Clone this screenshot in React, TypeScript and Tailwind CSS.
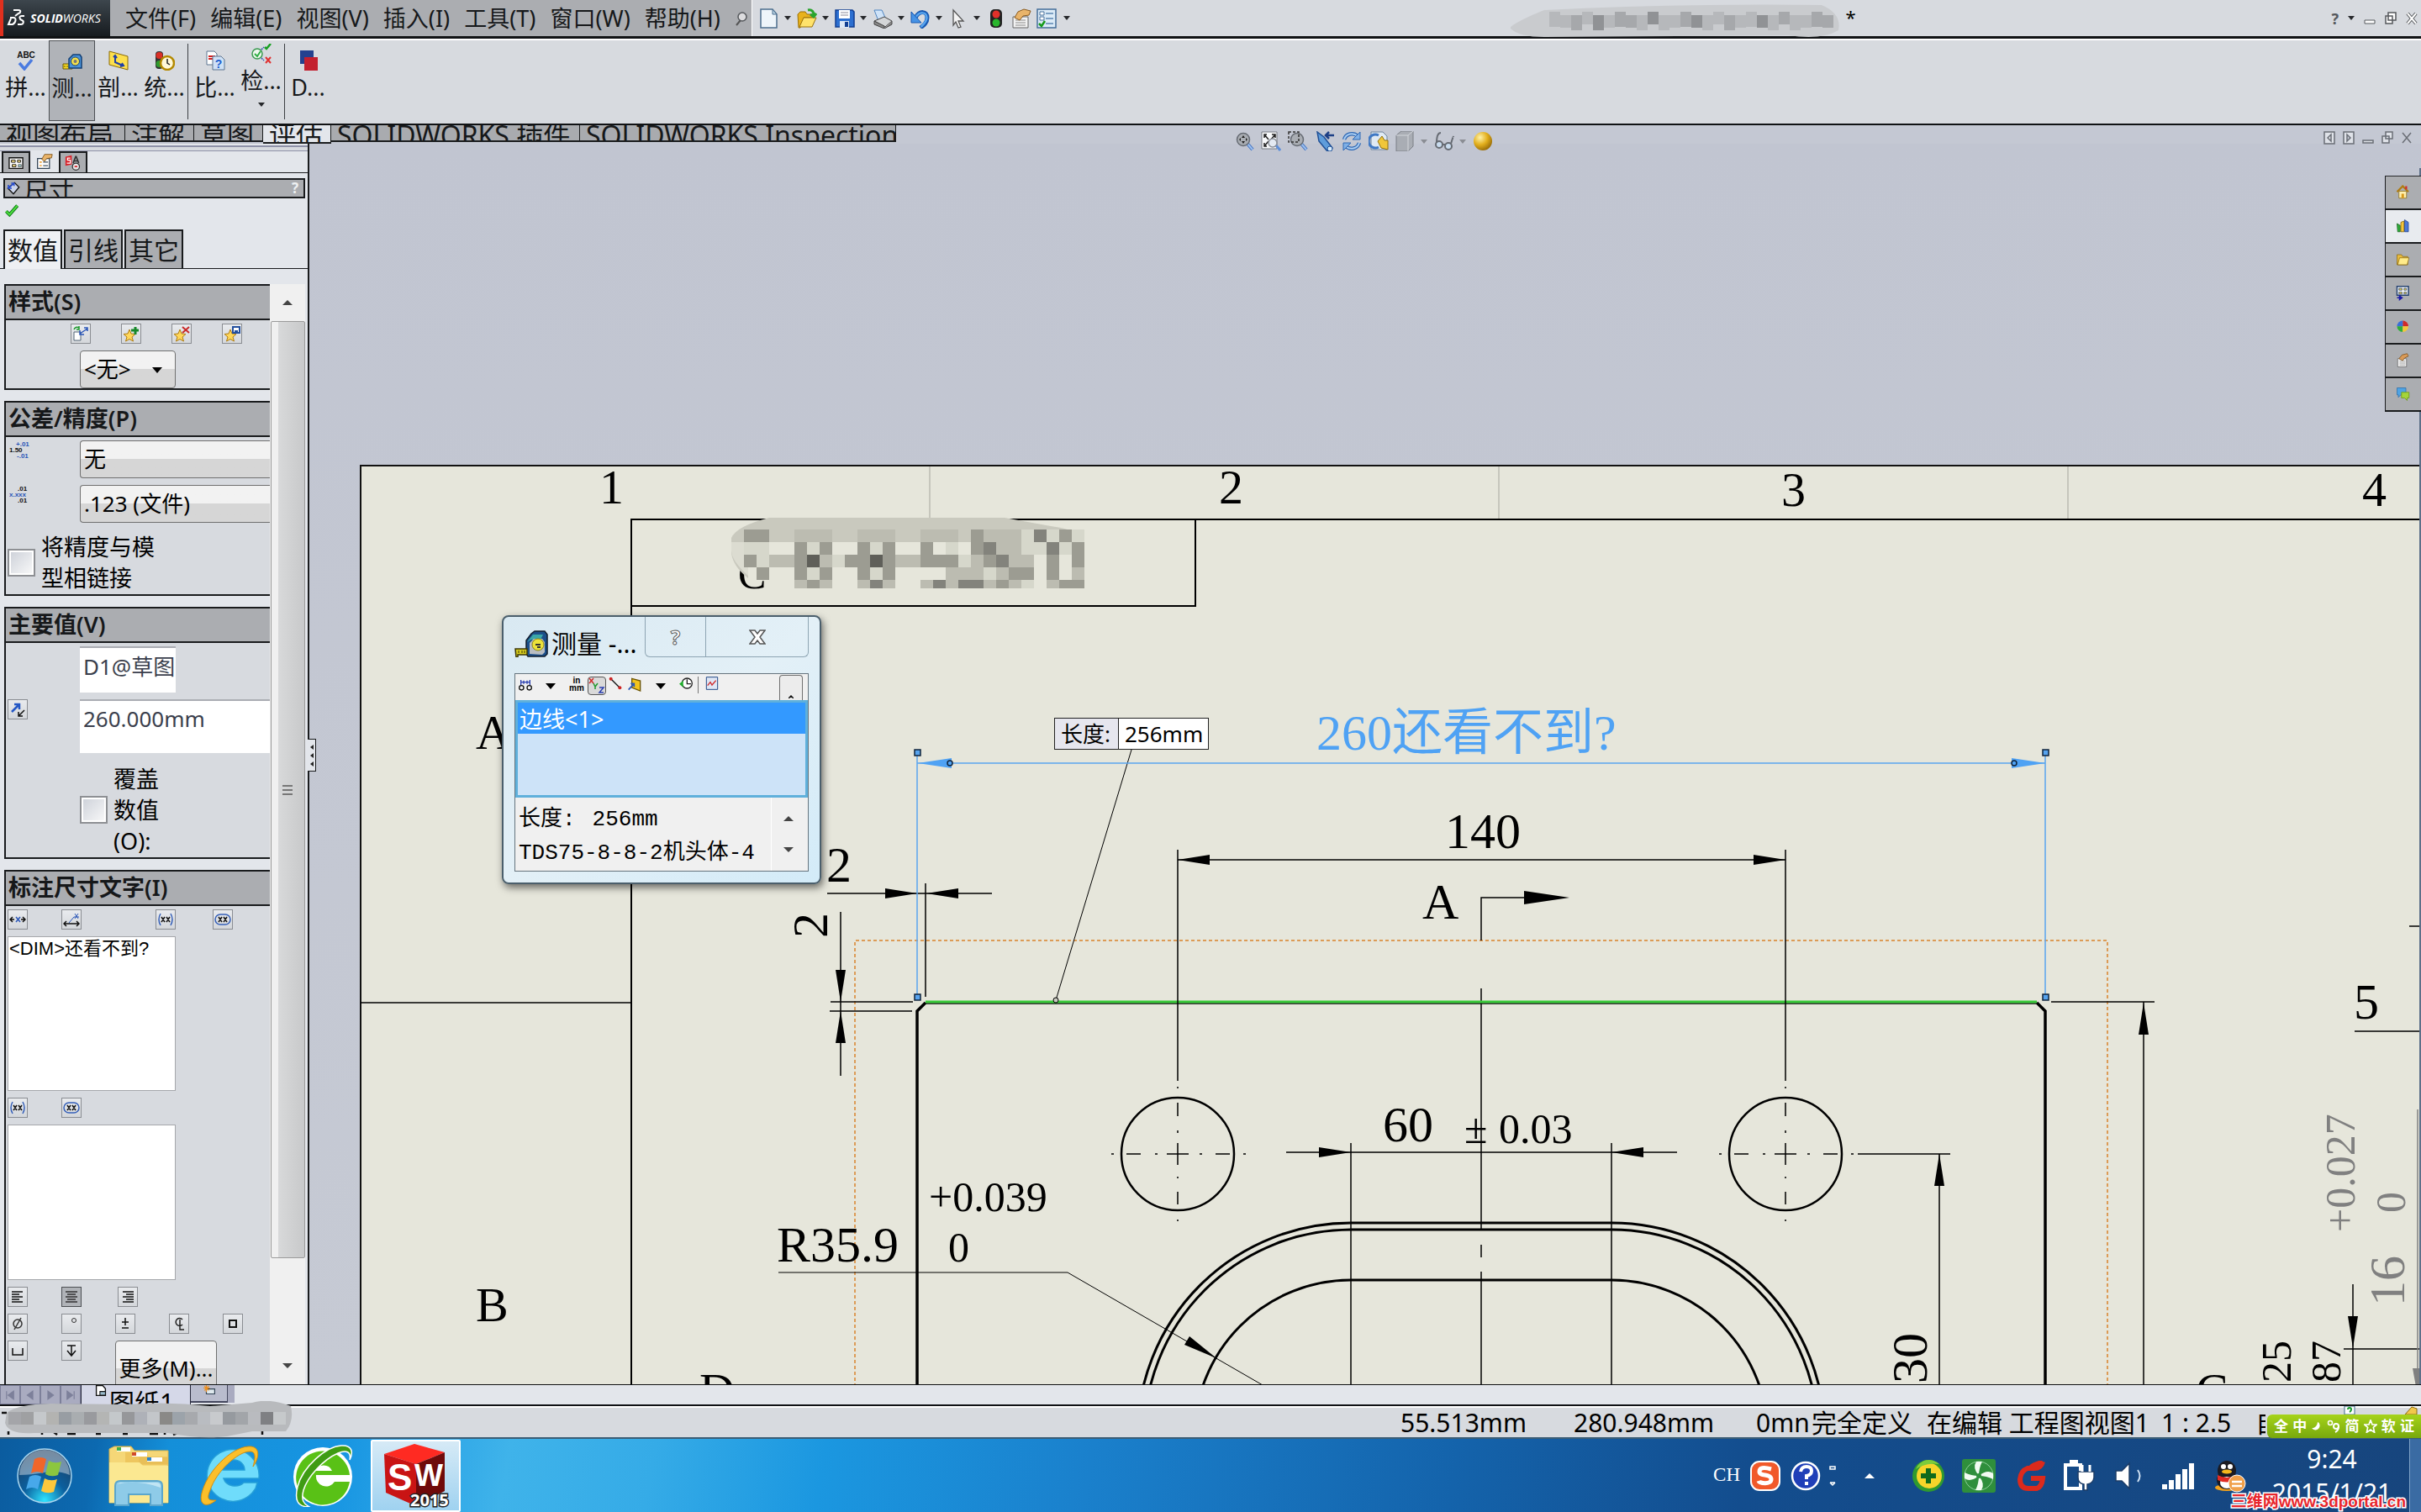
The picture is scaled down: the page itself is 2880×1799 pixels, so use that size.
import type { ReactNode } from "react";

/* ---------- small drawing helpers ---------- */

function Ico({ children, className = "size-6", vb = "0 0 24 24" }: { children: ReactNode; className?: string; vb?: string }) {
  return (
    <svg viewBox={vb} className={`${className} shrink-0`} fill="none" aria-hidden="true">
      {children}
    </svg>
  );
}

function Caret({ className = "text-[#26282b]" }: { className?: string }) {
  return (
    <Ico className={`h-[5px] w-2 ${className}`} vb="0 0 8 5">
      <path d="M0 0h8L4 5z" fill="currentColor" />
    </Ico>
  );
}

const GlassPlus = ({ kind }: { kind: "fit" | "area" | "plain" }) =>
  kind === "fit" ? (
    <Ico>
      <path d="M1 1h18v20H1z" fill="#f8f9fb" stroke="#777b82" />
      <path d="M4 8V4h3M13 4h4v4M4 14v4h3M4 4l5 6M17 4l-5 6M4 18l5-6" stroke="#222" strokeWidth="1.500" />
      <path d="M18 17l5 6" stroke="#5f8fd8" strokeWidth="3" />
      <circle cx="14" cy="14" r="5" fill="#e4eaf2" stroke="#8a8f98" strokeWidth="1.500" />
    </Ico>
  ) : (
    <Ico>
      <path d="M16 15l6 7" stroke="#3f6fc0" strokeWidth="4" />
      <path d="M16 15l6 7" stroke="#9cc0ee" strokeWidth="2" />
      <circle cx="11" cy="10" r="7.500" fill="#a9adb3" stroke="#666b73" strokeWidth="1.500" />
      {kind === "plain" && <path d="M11 5l-2 3h4zM11 15l-2-3h4zM6 10l2-2v4zM16 10l-2-2v4z" fill="#222" />}
      {kind === "area" && <path d="M1 1h12v12H1z" stroke="#333" strokeWidth="1.500" strokeDasharray="3 2" />}
    </Ico>
  );

const NewDoc = () => (
  <Ico>
    <path d="M2 1h14l5 6v16H2z" fill="#eef5fa" stroke="#4d6f8f" strokeWidth="1.500" />
    <path d="M16 1v6h5z" fill="#b9d3e4" stroke="#4d6f8f" />
  </Ico>
);
const OpenDoc = () => (
  <Ico>
    <path d="M1 7l3-3h6l2 3h7v4H8L4 23H2z" fill="#e8b21c" stroke="#9a7109" />
    <path d="M8 11h15l-5 11H3z" fill="#ffe36b" stroke="#9a7109" />
    <path d="M13 2c5-1 7 2 7 6M16 7l4 3 3-4" stroke="#29a52d" strokeWidth="3" />
  </Ico>
);
const SaveIco = () => (
  <Ico>
    <path d="M1 2h20l2 2v18H1z" fill="#2c6fd0" stroke="#123f91" strokeWidth="1.500" />
    <path d="M5 2h13v10H5z" fill="#fff" />
    <path d="M7 5h9M7 8h9" stroke="#889" />
    <path d="M6 15h11v8H6z" fill="#dce8f6" />
    <path d="M12 16h4v6h-4z" fill="#123f91" />
  </Ico>
);
const PrintIco = () => (
  <Ico>
    <path d="M2 2h9l5 11-9 2z" fill="#cfe3f8" stroke="#4f86c2" />
    <path d="M2 15l12-5 9 5-8 7z" fill="#d4d6d8" stroke="#444" />
    <path d="M2 15v4l12 5v-3zM23 15v4l-9 5" fill="#888" stroke="#444" />
  </Ico>
);
const UndoIco = () => (
  <Ico>
    <path d="M6 11C11 2 20 3 20 11c0 6-4 9-8 12" stroke="#1757b0" strokeWidth="5" />
    <path d="M6 11C11 3 19 4 19.500 11c0 5-4 8-7 11" stroke="#58a5ef" strokeWidth="2.500" />
    <path d="M1 4v13h12z" fill="#4693e6" stroke="#1757b0" />
  </Ico>
);
const CursorIco = () => (
  <Ico>
    <path d="M6 2l12 13-6 0 3 7-3 1-3-7-3 4z" fill="#f4f4f4" stroke="#555" strokeWidth="1.300" />
  </Ico>
);
const LightIco = () => (
  <Ico>
    <rect x="5" y="1" width="14" height="22" rx="5" fill="#222" />
    <circle cx="12" cy="7" r="4.500" fill="#e0302a" />
    <circle cx="12" cy="17" r="4.500" fill="#29b62d" />
  </Ico>
);
const HandIco = () => (
  <Ico>
    <path d="M2 10h18v13H2z" fill="#f2f2f2" stroke="#666" />
    <path d="M5 14h12M5 17h12M5 20h12" stroke="#8a8a8a" />
    <path d="M4 11l4-7 7-3 8 2-2 5-7 1-4 5z" fill="#e9b46a" stroke="#8a5a1d" />
  </Ico>
);
const ListIco = () => (
  <Ico>
    <path d="M1 1h22v22H1z" fill="#dcebf7" stroke="#456f9a" strokeWidth="1.500" />
    <path d="M4 4h5v4H4zM4 10h5v4H4z" stroke="#456f9a" fill="#fff" />
    <path d="M11 6h9M11 12h9M11 18h9" stroke="#5b86b3" strokeWidth="1.500" />
    <path d="M3 18l3 3 4-6" stroke="#159a1a" strokeWidth="2.500" />
  </Ico>
);
const TapeIco = ({ className = "size-6" }: { className?: string }) => (
  <Ico className={className}>
    <path d="M1 15h11v6H1z" fill="#f6d925" stroke="#6b5b05" />
    <path d="M3 17v2M6 17v2M9 17v2" stroke="#6b5b05" />
    <path d="M8 20V9l5-5h8l2 3v13z" fill="#4a93d8" stroke="#123f75" strokeWidth="1.500" />
    <circle cx="15.500" cy="12" r="5" fill="#f4e14b" stroke="#1d3f66" />
    <circle cx="15.500" cy="12" r="2" fill="#777" />
  </Ico>
);

const BigTape = () => (
  <Ico className="h-8 w-10" vb="0 0 40 32">
    <path d="M14 28V12l6-8 4-3h12l3 4v23l-3 3H16z" fill="#1c4f8a" stroke="#111d2c" strokeWidth="1.500" />
    <path d="M15 14l7-9h12l-3 6H20z" fill="#3ba7a8" />
    <path d="M18 28V15l5-5h10l3 4v12l-3 3z" fill="#b9bdc2" />
    <circle cx="28" cy="17" r="7" fill="#ece23a" stroke="#8d8414" />
    <path d="M25 17h6M27 20h4" stroke="#333" strokeWidth="2" />
    <path d="M1 22h14v7H4v3H2z" fill="#d8cc1e" stroke="#3b3604" strokeWidth="1.500" />
    <path d="M5 24v3M9 24v3M12 24v3" stroke="#3b3604" />
  </Ico>
);

/* ---------- title bar ---------- */

const menus = ["文件(F)", "编辑(E)", "视图(V)", "插入(I)", "工具(T)", "窗口(W)", "帮助(H)"];

const titleTiles = "bbabcbaabcbbacbbabbcbabbaa";
const tileFill: Record<string, string> = { a: "#a6a8ab", b: "#b6b8bb", c: "#909295" };

function TitleBar() {
  const quick: [string, ReactNode][] = [
    ["新建", <NewDoc />],
    ["打开", <OpenDoc />],
    ["保存", <SaveIco />],
    ["打印", <PrintIco />],
    ["撤销", <UndoIco />],
    ["选择", <CursorIco />],
  ];
  return (
    <header className="flex h-[46px] shrink-0 items-stretch border-b-[3px] border-[#101214] bg-[#d7dadf]">
      <div className="flex w-[131px] items-center gap-1 border-l-4 border-[#e0301e] bg-linear-to-b from-[#3d464d] to-[#171c20] pl-1 text-white">
        <Ico className="h-6 w-6">
          <path d="M8 2h6c3 0 3 3 0 4l-4 3M4 11h4c4 0 3 6-1 8H2l3-7M21 9h-3c-4 0-3 4 0 5s2 5-1 5h-4" stroke="#fff" strokeWidth="2" />
        </Ico>
        <span className="font-['Open_Sans',sans-serif] text-[14px] font-bold italic">
          SOLID<span className="font-normal">WORKS</span>
        </span>
      </div>
      <nav className="flex w-[764px] items-center gap-[17px] border-r border-white bg-[#abadb1] pl-[18px]">
        {menus.map((m) => (
          <button key={m} type="button" className="text-[27px] leading-8 whitespace-nowrap text-[#16181a]">
            {m}
          </button>
        ))}
        <Ico className="h-5 w-4" vb="0 0 16 20">
          <path d="M2 18l5-6" stroke="#555" strokeWidth="2" />
          <circle cx="9" cy="8" r="5" fill="#dcdcde" stroke="#55585c" strokeWidth="1.500" />
        </Ico>
      </nav>
      <div className="flex items-center pl-2">
        {quick.map(([n, i]) => (
          <div key={n} className="flex w-[45px] items-center gap-1.5">
            <button type="button" aria-label={n}>
              {i}
            </button>
            <Caret />
          </div>
        ))}
        <button type="button" aria-label="重建模型">
          <LightIco />
        </button>
        <button type="button" aria-label="文件属性" className="ml-1.5">
          <HandIco />
        </button>
        <button type="button" aria-label="选项" className="mr-2 ml-1.5">
          <ListIco />
        </button>
        <Caret />
      </div>
      <div className="ml-auto flex items-start">
        <svg viewBox="0 0 392 45" className="h-[45px] w-[392px] overflow-visible" aria-hidden="true">
          <path d="M0 32q10-8 40-20q160-8 330-6q24 10 20 30q-20 12-60 6l-290 2q-30 0-40-10z" fill="#c9cbce" />
          {titleTiles.split("").map((t, i) => (
            <rect key={i} x={46 + i * 13} y={i % 3 === 0 ? 14 : 18} width="13" height={i % 2 ? 15 : 18} fill={tileFill[t]} />
          ))}
        </svg>
        <span className="mt-2 w-[584px] pl-1.5 text-[22px] leading-6">*</span>
        <div className="flex h-full items-center gap-[11px] pr-1 text-[#55585c]">
          <button type="button" aria-label="帮助" className="text-[18px] leading-5 font-bold">
            ?
          </button>
          <Caret />
          <button type="button" aria-label="最小化">
            <Ico className="h-4 w-3.5" vb="0 0 14 16"><path d="M1 10h12v4H1z" fill="#fff" stroke="#55585c" /></Ico>
          </button>
          <button type="button" aria-label="还原">
            <Ico className="h-4 w-3.5" vb="0 0 14 16"><path d="M4 1h9v9H4zM1 5h8v9H1z" fill="#fff" stroke="#55585c" strokeWidth="1.500" /></Ico>
          </button>
          <button type="button" aria-label="关闭">
            <Ico className="h-4 w-3.5" vb="0 0 14 16"><path d="M2 2l10 12M12 2L2 14" stroke="#55585c" strokeWidth="4" /><path d="M2 2l10 12M12 2L2 14" stroke="#fff" strokeWidth="2" /></Ico>
          </button>
        </div>
      </div>
    </header>
  );
}

/* ---------- command manager ---------- */

function CommandButton({ label, icon, pressed, caret }: { label: string; icon: ReactNode; pressed?: boolean; caret?: boolean }) {
  return (
    <button
      type="button"
      className={`flex h-24 w-[55px] shrink-0 flex-col items-center text-[27px] leading-9 whitespace-nowrap text-[#16181a] ${
        pressed ? "border border-[#4c4f53] bg-[#b0b3b8]" : ""
      } ${caret ? "pt-1" : "pt-3"}`}
    >
      {icon}
      <span className="mt-0.5">{label}</span>
      {caret && <span className="mt-2"><Caret /></span>}
    </button>
  );
}

function CommandManager() {
  return (
    <section className="flex h-[103px] shrink-0 items-start border-t-2 border-b-2 border-t-white border-b-[#101214] bg-[#d7dadf] pl-[3px]">
      <CommandButton
        label="拼..."
        icon={
          <Ico>
            <text x="12" y="9" textAnchor="middle" fontSize="10" fontWeight="700" fontFamily="Liberation Sans" fill="#111">ABC</text>
            <path d="M4 15l6 7 9-11" stroke="#4a7be0" strokeWidth="3.500" />
          </Ico>
        }
      />
      <CommandButton pressed label="测..." icon={<TapeIco />} />
      <CommandButton
        label="剖..."
        icon={
          <Ico>
            <path d="M1 1l22 6v16L1 17z" fill="#fddf4c" stroke="#8a6a06" />
            <path d="M8 7v7l9 4M6 8l2-2 2 3M14 19l4-1-2-3" stroke="#1f3fa8" strokeWidth="2" />
          </Ico>
        }
      />
      <CommandButton
        label="统..."
        icon={
          <Ico>
            <rect x="1" y="1" width="9" height="21" rx="4" fill="#333" />
            <circle cx="5.500" cy="6" r="4" fill="#d92f26" />
            <circle cx="5.500" cy="16" r="4" fill="#2f9a2f" />
            <circle cx="15" cy="15" r="8" fill="#fff8d8" stroke="#b48900" strokeWidth="2.500" />
            <path d="M15 10v5l3 2" stroke="#222" strokeWidth="1.500" />
          </Ico>
        }
      />
      <div className="mt-1 mr-1 h-[90px] w-px bg-[#3c3f43]" />
      <CommandButton
        label="比..."
        icon={
          <Ico>
            <path d="M2 1h9l3 3v13H2z" fill="#fff" stroke="#5d7590" />
            <path d="M4 7h8M4 10h8" stroke="#d02020" strokeWidth="2" />
            <path d="M9 7h10l4 4v12H9z" fill="#cfe1f6" stroke="#5d7590" />
            <text x="16" y="21" textAnchor="middle" fontSize="14" fontWeight="700" fontFamily="Liberation Sans" fill="#1c5fd0">?</text>
          </Ico>
        }
      />
      <CommandButton
        caret
        label="检..."
        icon={
          <Ico>
            <circle cx="7" cy="12" r="6" stroke="#3a9a50" strokeWidth="1.500" fill="#eef7ee" />
            <path d="M4 12l3 3 4-6" stroke="#2fae44" strokeWidth="2" />
            <path d="M12 7l3-3M12 17l3 3" stroke="#2f4fb0" strokeWidth="1.500" strokeDasharray="2 1" />
            <path d="M16 4l2 2 5-6" stroke="#17a021" strokeWidth="2.500" />
            <path d="M17 16l6 7M23 16l-6 7" stroke="#e03030" strokeWidth="2" />
          </Ico>
        }
      />
      <div className="mt-1 h-[90px] w-px bg-[#3c3f43]" />
      <CommandButton
        label="D..."
        icon={
          <Ico>
            <path d="M2 0h16v16H2z" fill="#24418f" />
            <path d="M7 8h16v16H7z" fill="#c3202f" />
          </Ico>
        }
      />
    </section>
  );
}

function CommandTabs() {
  const tabs: [string, string][] = [
    ["视图布局", "w-[149px]"],
    ["注解", "w-[82px]"],
    ["草图", "w-[82px]"],
    ["评估", "w-[81px]"],
    ["SOLIDWORKS 插件", "w-[296px]"],
    ["SOLIDWORKS Inspection", "w-[376px]"],
  ];
  return (
    <nav className="flex h-[22px] shrink-0 items-start bg-[#c4c8d3]">
      {tabs.map(([t, w]) => (
        <button
          key={t}
          type="button"
          className={`${w} overflow-hidden border-r border-b-2 border-[#1a1c1e] pl-[7px] text-left text-[32px] leading-6 whitespace-nowrap text-[#16181a] ${
            t === "评估" ? "h-[22px] bg-[#e3e6eb]" : "h-5 bg-[#a9abaf]"
          }`}
        >
          {t}
        </button>
      ))}
    </nav>
  );
}

/* ---------- property manager ---------- */

function IconBtn({ label, children, className = "", pressed }: { label: string; children: ReactNode; className?: string; pressed?: boolean }) {
  return (
    <button
      type="button"
      aria-label={label}
      className={`flex size-6 shrink-0 items-center justify-center border ${
        pressed ? "border-[#4c4f53] bg-[#b0b3b8]" : "border-[#8a8d92] bg-linear-to-b from-[#e9ebee] to-[#d4d7db]"
      } ${className}`}
    >
      <Ico className="size-5" vb="0 0 20 20">{children}</Ico>
    </button>
  );
}

const XX = ({ oval }: { oval?: boolean }) => (
  <>
    {oval ? <rect x="1" y="4" width="18" height="12" rx="6" stroke="#3660b8" strokeWidth="1.500" /> : <path d="M4 3q-4 7 0 14M16 3q4 7 0 14" stroke="#3660b8" strokeWidth="1.500" />}
    <path d="M5 7l4 6M9 7l-4 6M11 7l4 6M15 7l-4 6" stroke="#111" strokeWidth="1.500" />
  </>
);

const Star = () => <path d="M8 5l2 5 5 .5-4 3.500 1.500 5L8 16.500 3.500 19 5 14 1 10.500 6 10z" fill="#ffd75a" stroke="#b07c10" />;

function Group({ title, children, className = "" }: { title: string; children: ReactNode; className?: string }) {
  return (
    <section className={`shrink-0 border-t-2 border-b-2 border-l-2 border-[#191b1d] bg-[#d7dadf] ${className}`}>
      <h3 className="flex h-[41px] items-center border-b-2 border-[#191b1d] bg-[#abadb1] pl-[3px] text-[27px] font-semibold whitespace-nowrap text-[#16181a]">
        {title}
      </h3>
      {children}
    </section>
  );
}

const comboCls = "h-[45px] appearance-none rounded-sm border border-[#707070] bg-linear-to-b from-[#f2f2f2] from-50% to-[#d6d6d6] to-50% pl-1 text-[26px] text-black";
const boxCls = "size-[33px] shrink-0 appearance-none border-2 border-[#8e9094] bg-linear-to-br from-[#ccd0d8] to-[#fafafa] outline-2 -outline-offset-4 outline-white";

function PropertyManager() {
  return (
    <aside className="flex w-[368px] shrink-0 flex-col overflow-hidden border-r-2 border-[#1a1c1e] bg-[#e3e6eb]">
      <div className="mt-0.5 h-[7px] shrink-0 border-t-2 border-b border-[#8f92a8] bg-[#d7dadf]" />
      <div className="flex h-[26px] shrink-0 items-end border-b border-[#1a1c1e] pl-0.5">
        <button type="button" aria-label="特征树" className="flex h-[25px] w-[34px] items-center justify-center border-2 border-b-0 border-[#1a1c1e] bg-[#abadb1]">
          <Ico className="h-4 w-[18px]" vb="0 0 20 16">
            <path d="M1 1h18v14H1z" fill="#fff" stroke="#111" strokeWidth="1.500" />
            <path d="M4 4h5v3H4zM12 4h4v3h-4zM5 10h5v3H5z" fill="#ffe78a" stroke="#111" />
            <path d="M13 10h4v3h-4z" fill="#9cc" stroke="#666" />
          </Ico>
        </button>
        <button type="button" aria-label="属性" className="flex h-[26px] w-[34px] items-center justify-center bg-[#e3e6eb]">
          <Ico className="size-5"><path d="M2 8h17v14H2z" fill="#fff" stroke="#345" strokeWidth="1.500" /><path d="M5 12h3v2H5zM5 17h3v2H5z" fill="#e9a03a" /><path d="M10 13h7M10 18h7" stroke="#456" strokeWidth="1.500" /><path d="M8 9l4-7 11 0-1 5-7 1-3 4z" fill="#e9b46a" stroke="#7a5016" /></Ico>
        </button>
        <button type="button" aria-label="配置" className="flex h-[25px] w-[34px] items-center justify-center border-2 border-b-0 border-[#1a1c1e] bg-[#abadb1]">
          <Ico className="size-5"><path d="M1 3l9-2v13l-9 2z" fill="#d8222a" /><path d="M8 5H4v3h4v4H3" stroke="#fff" strokeWidth="1.500" /><path d="M16 2l-4 10M16 2l4 10M13 9h6" stroke="#333" strokeWidth="2" /><circle cx="16" cy="17" r="5" fill="#e8e8e8" stroke="#333" strokeWidth="1.500" /><path d="M14 17h4" stroke="#d8222a" strokeWidth="2" /></Ico>
        </button>
      </div>
      <div className="mt-1.5 mr-[3px] ml-1 flex h-6 shrink-0 items-start overflow-hidden border-2 border-[#191b1d] bg-[#abadb1] text-[30px] leading-7 text-[#16181a]">
        <Ico className="mt-0.5 ml-0.5 size-4"><path d="M2 12L14 2l8 8-10 12z" stroke="#111" strokeWidth="2" fill="#cdd5ea" /><path d="M3 12l10-9M3 6v6h6M8 3h5v5" stroke="#2a4fd0" strokeWidth="2.500" /></Ico>
        <h2 className="ml-1 whitespace-nowrap">尺寸</h2>
        <button type="button" aria-label="帮助" className="mr-1.5 ml-auto text-[17px] leading-5 font-bold text-[#eef0f2]">?</button>
      </div>
      <div className="h-[37px] shrink-0 pt-1.5 pl-1.5">
        <button type="button" aria-label="确定" className="block">
          <Ico className="size-4"><path d="M2 14l6 6L22 4" stroke="#0f7a18" strokeWidth="6" /><path d="M2 14l6 6L22 4" stroke="#4fe03f" strokeWidth="3" /></Ico>
        </button>
      </div>
      <div className="flex h-[47px] shrink-0 gap-0.5 border-b border-[#191b1d] pl-1 text-[30px] text-[#16181a]">
        <button type="button" className="-mb-px w-[70px] border-2 border-b-0 border-[#191b1d] bg-[#eef0f3] whitespace-nowrap">数值</button>
        <button type="button" className="w-[70px] border-2 border-b-0 border-[#191b1d] bg-[#abadb1] whitespace-nowrap">引线</button>
        <button type="button" className="w-[70px] border-2 border-b-0 border-[#191b1d] bg-[#abadb1] whitespace-nowrap">其它</button>
      </div>
      <div className="mt-[18px] flex min-h-0 flex-1">
        <div className="flex min-w-0 flex-1 flex-col gap-[13px] overflow-hidden pl-[5px]">
          <Group title="样式(S)" className="h-[126px]">
            <div className="mt-1 ml-[77px] flex gap-9">
              <IconBtn label="应用默认属性"><path d="M2 8h8v10H2z" fill="#fff" stroke="#567" /><path d="M2 5q2-4 6-2M8 1v4H5" stroke="#1c9a2c" strokeWidth="1.500" /><path d="M9 10l9-6M9 6v5h5M14 3h4v4" stroke="#2a56b8" strokeWidth="1.500" /></IconBtn>
              <IconBtn label="添加样式"><Star /><path d="M15 2v9M10 6h9" stroke="#17882a" strokeWidth="3" /></IconBtn>
              <IconBtn label="删除样式"><Star /><path d="M11 2l8 7M19 2l-8 7" stroke="#c92a2a" strokeWidth="2" /></IconBtn>
              <IconBtn label="保存样式"><Star /><path d="M11 2h8v7h-8z" fill="#fff" stroke="#24509e" strokeWidth="2" /><path d="M13 6h4v3h-4z" fill="#24509e" /></IconBtn>
            </div>
            <div className="relative mt-2 ml-[88px] w-[114px]">
              <select aria-label="样式" className={`${comboCls} w-full`}>
                <option>&lt;无&gt;</option>
              </select>
              <Ico className="pointer-events-none absolute top-5 right-4 h-[7px] w-3 text-black" vb="0 0 12 7"><path d="M0 0h12L6 7z" fill="currentColor" /></Ico>
            </div>
          </Group>

          <Group title="公差/精度(P)" className="h-[232px]">
            <div className="mt-1 flex">
              <Ico className="ml-1 size-6">
                <text x="8" y="7" fontSize="8" fontWeight="700" fontFamily="Liberation Sans" fill="#2a56b8">+.01</text>
                <text x="0" y="14" fontSize="8" fontWeight="700" fontFamily="Liberation Sans" fill="#111">1.50</text>
                <text x="9" y="21" fontSize="8" fontWeight="700" fontFamily="Liberation Sans" fill="#2a56b8">-.01</text>
              </Ico>
              <select aria-label="公差类型" className={`${comboCls} ml-[60px] flex-1 rounded-r-none border-r-0`}>
                <option>无</option>
              </select>
            </div>
            <div className="mt-2 flex">
              <Ico className="ml-1 size-6">
                <text x="10" y="7" fontSize="8" fontWeight="700" fontFamily="Liberation Sans" fill="#111">.01</text>
                <text x="0" y="14" fontSize="8" fontWeight="700" fontFamily="Liberation Sans" fill="#2a56b8">x.xxx</text>
                <text x="10" y="21" fontSize="8" fontWeight="700" fontFamily="Liberation Sans" fill="#111">.01</text>
              </Ico>
              <select aria-label="单位精度" className={`${comboCls} ml-[60px] flex-1 rounded-r-none border-r-0`}>
                <option>.123 (文件)</option>
              </select>
            </div>
            <label className="mt-2.5 ml-0.5 flex items-center gap-[7px] text-[27px] leading-[37px]">
              <input type="checkbox" className={boxCls} />
              <span className="w-[140px]">将精度与模型相链接</span>
            </label>
          </Group>

          <Group title="主要值(V)" className="h-[300px]">
            <input aria-label="名称" defaultValue="D1@草图" className="mt-1 ml-[88px] block h-[55px] w-[114px] border-t-2 border-[#abadb3] bg-white pr-0 pb-3 pl-1 text-[26px] text-[#3b3f4d]" />
            <div className="mt-2 flex items-start">
              <IconBtn label="反向" className="ml-0.5"><path d="M3 13l8-8M6 4h6v6" stroke="#2457c5" strokeWidth="2.500" /><path d="M18 11l-6 6M11 13v5h5" stroke="#111" strokeWidth="1.500" /></IconBtn>
              <input aria-label="尺寸值" defaultValue="260.000mm" className="ml-[62px] block h-16 min-w-0 flex-1 border-t-2 border-[#abadb3] bg-white pb-5 pl-1 text-[26px] text-[#3b3f4d]" />
            </div>
            <label className="mt-3 ml-[88px] flex items-center gap-[7px] text-[27px] leading-[37px]">
              <input type="checkbox" className={boxCls} />
              <span className="w-[58px]">覆盖数值(O):</span>
            </label>
          </Group>

          <Group title="标注尺寸文字(I)">
            <div className="mt-1 ml-0.5 flex">
              <IconBtn label="居中尺寸"><path d="M1 10h5M14 10h5M4 7l-3 3 3 3M16 7l3 3-3 3" stroke="#111" strokeWidth="1.500" /><path d="M8 7l5 6M13 7l-5 6" stroke="#2a56b8" strokeWidth="1.500" /></IconBtn>
              <IconBtn label="等距文字" className="ml-10"><path d="M1 15h18M4 12l-3 3 3 3M16 12l3 3-3 3" stroke="#111" strokeWidth="1.500" /><path d="M7 14l6-7h6M14 3l4 6M18 3l-4 6" stroke="#2a56b8" /></IconBtn>
              <IconBtn label="添加括号" className="ml-[88px]"><XX /></IconBtn>
              <IconBtn label="检查尺寸" className="ml-11"><XX oval /></IconBtn>
            </div>
            <textarea aria-label="标注尺寸文字" defaultValue="<DIM>还看不到?" className="mt-2 ml-0.5 block h-[184px] w-[200px] resize-none overflow-hidden border border-[#a5a7ab] bg-white pl-px font-['Liberation_Sans','Noto_Sans_CJK_SC',sans-serif] text-[22px] leading-7 text-black" />
            <div className="mt-2 ml-0.5 flex gap-10">
              <IconBtn label="下方括号"><XX /></IconBtn>
              <IconBtn label="下方检查"><XX oval /></IconBtn>
            </div>
            <textarea aria-label="下方文字" className="mt-2 ml-0.5 block h-[185px] w-[200px] resize-none border border-[#a5a7ab] bg-white" />
            <div className="mt-2 ml-0.5 flex">
              <IconBtn label="左对齐"><path d="M3 4h13M3 7h9M3 10h13M3 13h9M3 16h13" stroke="#111" strokeWidth="1.500" /></IconBtn>
              <IconBtn label="居中" pressed className="ml-10"><path d="M3 4h14M5 7h10M3 10h14M5 13h10M3 16h14" stroke="#333" strokeWidth="1.500" /></IconBtn>
              <IconBtn label="右对齐" className="ml-[43px]"><path d="M4 4h13M8 7h9M4 10h13M8 13h9M4 16h13" stroke="#111" strokeWidth="1.500" /></IconBtn>
            </div>
            <div className="mt-2 ml-0.5 flex gap-10">
              <IconBtn label="直径"><circle cx="10" cy="10" r="5" stroke="#333" strokeWidth="1.500" /><path d="M6 17l8-14" stroke="#333" strokeWidth="1.500" /></IconBtn>
              <IconBtn label="度数"><circle cx="13" cy="6" r="2.500" stroke="#333" /></IconBtn>
              <IconBtn label="正负"><path d="M10 3v9M6 8h8M6 15h8" stroke="#111" strokeWidth="1.500" /></IconBtn>
              <IconBtn label="中心线"><path d="M14 5a4.500 4.500 0 1 0 0 6M11 5v12h5" stroke="#222" strokeWidth="1.500" /></IconBtn>
              <IconBtn label="方形"><path d="M6 6h8v8H6z" stroke="#111" strokeWidth="2" /></IconBtn>
            </div>
            <div className="mt-2 ml-0.5 flex gap-10">
              <IconBtn label="柱形沉头孔"><path d="M4 7v8h12V7" stroke="#111" strokeWidth="1.500" /></IconBtn>
              <IconBtn label="深度"><path d="M5 4h10M10 4v12M5 10l5 6 5-6" stroke="#111" strokeWidth="1.500" /></IconBtn>
              <button type="button" className="h-[66px] w-[121px] rounded-sm border border-[#707070] bg-linear-to-b from-[#f2f2f2] from-50% to-[#d6d6d6] to-50% text-[26px] whitespace-nowrap text-black">
                更多(M)...
              </button>
            </div>
          </Group>
        </div>
        <div className="mr-[3px] flex w-[42px] shrink-0 flex-col items-center bg-[#f0f0f0]">
          <div className="flex h-11 items-center"><Ico className="h-1.5 w-3" vb="0 0 12 6"><path d="M6 0l6 6H0z" fill="#444" /></Ico></div>
          <div className="flex h-[1115px] w-[41px] flex-col items-center justify-center gap-[3px] rounded-xs border border-[#9a9a9a] bg-linear-to-r from-[#f0f0f0] from-20% via-[#d8d9da] via-20% to-[#c8c9ca]">
            <span className="h-0.5 w-3 bg-[#777]" />
            <span className="h-0.5 w-3 bg-[#777]" />
            <span className="h-0.5 w-3 bg-[#777]" />
          </div>
          <div className="mt-[125px]"><Ico className="h-1.5 w-3" vb="0 0 12 6"><path d="M6 6l6-6H0z" fill="#444" /></Ico></div>
        </div>
      </div>
    </aside>
  );
}

/* ---------- drawing sheet ---------- */

type Dir = "l" | "r" | "u" | "d";
function Arrow({ x, y, dir, len = 38, hw = 6, fill = "#000" }: { x: number; y: number; dir: Dir; len?: number; hw?: number; fill?: string }) {
  const p = {
    l: `${x},${y} ${x + len},${y - hw} ${x + len},${y + hw}`,
    r: `${x},${y} ${x - len},${y - hw} ${x - len},${y + hw}`,
    u: `${x},${y} ${x - hw},${y + len} ${x + hw},${y + len}`,
    d: `${x},${y} ${x - hw},${y - len} ${x + hw},${y - len}`,
  }[dir];
  return <polygon points={p} fill={fill} />;
}

const mosaic = [
  "33..222..222..222.322214131",
  "11..313..313..3.1.342211413",
  "31223521335322333123422.3.3",
  ".3..313..313....2221233.3.2",
  "....232..242..242442321.233",
];
const mosaicFill: Record<string, string> = { "1": "#d6d7cb", "2": "#bcbcb1", "3": "#9c9c92", "4": "#83837c", "5": "#5f5f59" };

function HoleMarks({ cx }: { cx: number }) {
  return (
    <g>
      <circle cx={cx} cy="1373" r="67" strokeWidth="2.500" />
      <path d={`M${cx} 1011V1286M${cx} 1293v2M${cx} 1312v16M${cx} 1345v3M${cx} 1360v26M${cx} 1400v2M${cx} 1418v15M${cx} 1451v2`} />
      <path d={`M${cx - 79} 1373h3M${cx - 61} 1373h17M${cx - 27} 1373h3M${cx - 13} 1373h26M${cx + 26} 1373h3M${cx + 45} 1373h17M${cx + 78} 1373h3`} />
    </g>
  );
}

function Sheet() {
  return (
    <svg viewBox="368 171 2512 1476" preserveAspectRatio="xMinYMin slice" className="absolute inset-0 h-full w-full" fill="none" fontFamily="'Liberation Serif','Noto Sans CJK SC',serif">
      <rect x="429" y="554" width="2460" height="1100" fill="#e6e6db" stroke="#111" strokeWidth="2" />
      <path d="M1106 555v62M1783 555v62M2460 555v62" stroke="#c6c6bc" strokeWidth="2" />
      <g stroke="#000" strokeWidth="1.500">
        <path d="M2880 618H751V1650M751 721H1422V618" strokeWidth="2" />
        <path d="M429 1193H751" />
        <path d="M1017 1650V1119H2507V1650" stroke="#d9822b" strokeDasharray="4 3" />
        {/* section line and plate centre line */}
        <path d="M1762 1119V1068H1815M1762 1176V1464M1762 1481v15M1762 1513V1650" />
        {/* plate outline */}
        <path d="M1091 1650V1203L1101 1193M2423 1193L2433 1203V1650" strokeWidth="3.500" />
        <path d="M1101 1194H2423" />
        <path d="M1101 1192H2423" stroke="#37c837" strokeWidth="3" />
        <HoleMarks cx={1401} />
        <HoleMarks cx={2124} />
        <path d="M1401 1023H2124M2210 1373H2320M2307 1373V1650" />
        <path d="M1530 1371H1995M1607 1360V1650M1917 1360V1650" />
        {/* pocket contours */}
        <g strokeWidth="3">
          <path d="M1353 1709A254 254 0 0 1 1607 1455H1917A254 254 0 0 1 2171 1709" />
          <path d="M1361 1709A246 246 0 0 1 1607 1463H1917A246 246 0 0 1 2163 1709" />
          <path d="M1421 1709A186 186 0 0 1 1607 1523H1917A186 186 0 0 1 2103 1709" />
        </g>
        <path d="M926 1514H1270L1502 1648" strokeWidth="1" />
        {/* chamfer dimensions */}
        <path d="M984 1063H1180M1101 1051V1186M1000 1085V1280M988 1192H1086M987 1203H1085" />
        <path d="M1346 892L1256 1190" strokeWidth="1" />
        <circle cx="1256" cy="1190" r="3" strokeWidth="1" fill="#c9c9c0" />
        {/* right-hand dimensions */}
        <path d="M2440 1192H2563M2550 1192V1650M2801 1227H2880M2799 1528V1650M2788 1605H2880M2866 1102h14" />
        <path d="M2876 1320V1650" stroke="#808080" />
      </g>
      <g stroke="#5aa5f0" strokeWidth="1.500">
        <path d="M1091 896V1186M2433 896V1186M1091 908H2433" />
      </g>
      <g fill="#57a3ee" stroke="#10243c" strokeWidth="1.500">
        <path d="M1088 892h7v7h-7zM2430 892h7v7h-7zM1088 1183h7v7h-7zM2430 1183h7v7h-7z" />
      </g>
      <Arrow x={1092} y={908} dir="l" len={40} fill="#4fa2f4" />
      <Arrow x={2433} y={908} dir="r" len={40} fill="#4fa2f4" />
      <g stroke="#10243c" strokeWidth="1.500"><circle cx="1130" cy="908" r="3" /><circle cx="2396" cy="908" r="3" /></g>
      <Arrow x={1401} y={1023} dir="l" />
      <Arrow x={2124} y={1023} dir="r" />
      <Arrow x={1867} y={1068} dir="r" len={54} hw={8} />
      <Arrow x={1091} y={1063} dir="r" />
      <Arrow x={1102} y={1063} dir="l" />
      <Arrow x={1000} y={1192} dir="d" />
      <Arrow x={1000} y={1203} dir="u" />
      <Arrow x={1607} y={1371} dir="r" />
      <Arrow x={1917} y={1371} dir="l" />
      <Arrow x={2307} y={1373} dir="u" />
      <Arrow x={2550} y={1193} dir="u" />
      <Arrow x={2799} y={1604} dir="d" />
      <polygon points="1447,1616 1415,1590 1409,1600" fill="#000" />
      <path d="M2870 1628h10v22h-6z" fill="#808080" />

      <g fill="#000" fontSize="58">
        <text x="713" y="599">1</text>
        <text x="1450" y="599">2</text>
        <text x="2119" y="602">3</text>
        <text x="2810" y="602">4</text>
        <text x="566" y="891">A</text>
        <text x="566" y="1572">B</text>
        <text x="832" y="1674">D</text>
        <text x="2612" y="1674">C</text>
      </g>
      <g fill="#000" fontSize="60">
        <text x="983" y="1049">2</text>
        <text x="1719" y="1009">140</text>
        <text x="1692" y="1093">A</text>
        <text x="1645" y="1358">60</text>
        <text x="924" y="1501">R35.9</text>
        <text x="2800" y="1212">5</text>
        <text transform="translate(984 1116) rotate(-90)">2</text>
        <text transform="translate(2292 1646) rotate(-90)">30</text>
        <text transform="translate(2860 1554) rotate(-90)" fill="#808080">16</text>
        <text x="1566" y="892" fill="#4fa2f4">260还看不到?</text>
      </g>
      <g fill="#000" fontSize="50">
        <text x="1742" y="1360">±</text>
        <text x="1783" y="1360">0.03</text>
        <text x="1105" y="1441">+0.039</text>
        <text x="1128" y="1501">0</text>
        <text transform="translate(2801 1466) rotate(-90)" fill="#808080">+0.027</text>
        <text transform="translate(2861 1443) rotate(-90)" fill="#808080">0</text>
        <text transform="translate(2725 1670) rotate(-90)">025</text>
        <text transform="translate(2784 1670) rotate(-90)">087</text>
        <text x="878" y="700">C</text>
      </g>
      {/* redaction tiles */}
      <path d="M870 640q6-14 45-24H1195l55 10q34 4 40 20l-12 20H890v22q-18-14-20-30z" fill="#c9c9be" />
      <path d="M870 645h20v40q-20-18-20-30z" fill="#dcdcd1" />
      <rect x="915" y="645" width="360" height="57" fill="#e6e6db" />
      {mosaic.map((row, r) =>
        row.split("").map((c, i) =>
          c === "." ? null : <rect key={`${r}-${i}`} x={885 + i * 15} y={630 + r * 15} width="15" height={r === 4 ? 10 : 15} fill={mosaicFill[c]} />,
        ),
      )}
      <path d="M2879 200V1647" stroke="#5c6f88" strokeWidth="2" />
    </svg>
  );
}

function MeasureDialog() {
  return (
    <section
      role="dialog"
      aria-label="测量"
      className="absolute top-[561px] left-[229px] flex h-[320px] w-[380px] flex-col rounded-lg border-2 border-[#4b5f6c] bg-linear-to-br from-[#d9e9f2] via-[#e3f0f7] to-[#d3ebf8] px-[13px] pb-[13px] shadow-[2px_4px_10px_rgba(0,0,0,0.55)]"
    >
      <div className="flex h-[67px] shrink-0 items-start">
        <div className="mt-4 flex items-center gap-1">
          <BigTape />
          <h2 className="text-[30px] leading-8 whitespace-nowrap text-black">测量 -...</h2>
        </div>
        <div className="ml-auto flex h-12 rounded-b-md border border-t-0 border-[#8ea5b3] text-white">
          <button type="button" aria-label="帮助" className="flex w-[72px] items-center justify-center border-r border-[#8ea5b3]">
            <span className="text-[24px] leading-8 font-bold [-webkit-text-stroke:1px_#555]">?</span>
          </button>
          <button type="button" aria-label="关闭" className="flex w-[121px] items-center justify-center">
            <Ico className="h-[18px] w-5" vb="0 0 20 18"><path d="M1 1h6l3 4 3-4h6l-6 8 6 8h-6l-3-4-3 4H1l6-8z" fill="#fff" stroke="#555" strokeWidth="1.500" /></Ico>
          </button>
        </div>
      </div>
      <div className="flex min-h-0 flex-1 flex-col border border-[#66747d] bg-[#f0f0f0]">
        <div className="flex h-[31px] shrink-0 items-start pt-[3px] pl-1">
          <button type="button" aria-label="圆弧测量"><Ico className="h-5 w-4"><path d="M4 3v10M20 3v10M4 7h16M9 4v6M15 4v6" stroke="#2a3fb0" strokeWidth="2" /><circle cx="5" cy="17" r="4" stroke="#111" strokeWidth="2" /><circle cx="19" cy="17" r="4" stroke="#111" strokeWidth="2" /></Ico></button>
          <Ico className="mt-2 ml-4 h-[7px] w-3" vb="0 0 12 7"><path d="M0 0h12L6 7z" fill="#000" /></Ico>
          <button type="button" aria-label="单位" className="ml-4 font-['Liberation_Sans',sans-serif] text-[10px] leading-[9px] font-bold text-black">in<br />mm</button>
          <button type="button" aria-label="显示XYZ测量" className="ml-1 flex size-[22px] items-center justify-center rounded-sm border border-[#555] bg-[#d9d9d9]">
            <Ico className="size-5" vb="0 0 20 20"><path d="M1 1l5 6M6 1L1 7" stroke="#d02a2a" strokeWidth="1.500" /><path d="M6 7l2 4 3-4M8 11v3" stroke="#1d9a2d" strokeWidth="1.500" /><path d="M13 12h5l-5 6h5" stroke="#2a3fb0" strokeWidth="1.500" /></Ico>
          </button>
          <button type="button" aria-label="点到点" className="ml-[3px]"><Ico className="size-4"><path d="M3 3l18 18" stroke="#111" strokeWidth="2" /><circle cx="4" cy="4" r="3" fill="#c22" /><circle cx="20" cy="20" r="3" fill="#c22" /></Ico></button>
          <button type="button" aria-label="投影" className="ml-[7px]"><Ico className="h-[18px] w-4"><path d="M7 2l15 4v18L7 18z" fill="#f2c31c" stroke="#6b5405" strokeWidth="2" /><path d="M1 22l10-11M5 11h6v6" stroke="#2a56b8" strokeWidth="2.500" /></Ico></button>
          <Ico className="mt-2 ml-[17px] h-[7px] w-3" vb="0 0 12 7"><path d="M0 0h12L6 7z" fill="#000" /></Ico>
          <button type="button" aria-label="历史记录" className="ml-4"><Ico className="size-4"><circle cx="14" cy="12" r="9" fill="#fff" stroke="#222" strokeWidth="2" /><path d="M14 5v8h7" stroke="#222" strokeWidth="2" /><path d="M0 13l7-6v12z" fill="#1fae2c" /></Ico></button>
          <span className="ml-1.5 h-5 w-px bg-[#777]" />
          <button type="button" aria-label="传感器" className="ml-2"><Ico className="size-4"><path d="M2 1h20v22H2z" fill="#dfe7f5" stroke="#234a86" strokeWidth="1.500" /><path d="M4 16l5-6 3 5 7-8" stroke="#d02a2a" strokeWidth="2" /></Ico></button>
          <button type="button" aria-label="展开" className="mt-[-2px] mr-1.5 ml-auto flex h-[30px] w-7 items-end justify-center rounded-t-sm border border-b-0 border-[#707070] bg-[#ececec]">
            <Ico className="mb-0.5 h-1 w-1.5" vb="0 0 6 4"><path d="M0 4l3-3 3 3" stroke="#111" strokeWidth="1.500" /></Ico>
          </button>
        </div>
        <ul className="h-[116px] shrink-0 border-[3px] border-[#5fb0db] bg-[#cde3f8]">
          <li className="h-[37px] bg-[#3399ff] pl-0.5 text-[27px] leading-10 text-white">边线&lt;1&gt;</li>
        </ul>
        <div className="flex min-h-0 flex-1">
          <div className="flex-1 pt-1.5 pl-1 font-['Liberation_Mono','Noto_Sans_CJK_SC',monospace] text-[26px] leading-10 whitespace-nowrap text-black">
            <p>长度:<span className="ml-5">256mm</span></p>
            <p>TDS75-8-8-2机头体-4</p>
          </div>
          <div className="flex w-11 flex-col items-center justify-between border-l border-white py-[22px] pr-1">
            <Ico className="h-1.5 w-3" vb="0 0 12 6"><path d="M6 0l6 6H0z" fill="#444" /></Ico>
            <Ico className="h-1.5 w-3" vb="0 0 12 6"><path d="M6 6l6-6H0z" fill="#444" /></Ico>
          </div>
        </div>
      </div>
    </section>
  );
}

function HeadsUp() {
  const arrow = <Caret className="text-[#8a8d94]" />;
  return (
    <div className="absolute top-[-15px] left-[1100px] flex h-6 items-center gap-2">
      <GlassPlus kind="plain" />
      <GlassPlus kind="fit" />
      <GlassPlus kind="area" />
      <Ico><path d="M3 1l8 6 10 13-6 4L5 12z" fill="#5f9ddb" stroke="#1f4f95" strokeWidth="1.500" /><path d="M23 5h-9M17 1l-4 4 4 4" stroke="#1c3f86" strokeWidth="2.500" /><circle cx="18" cy="21" r="3" fill="#d7ebfb" stroke="#1f4f95" /></Ico>
      <Ico><path d="M3 10C5 3 14 1 19 6M21 14C19 21 10 23 5 18" stroke="#2f68b4" strokeWidth="4.500" /><path d="M3 10C5 3 14 1 19 6M21 14C19 21 10 23 5 18" stroke="#a9cdf2" strokeWidth="2" /><path d="M22 1v9h-9zM2 23v-9h9z" fill="#7fb0e6" stroke="#2f68b4" /></Ico>
      <Ico><path d="M3 1h14l5 5v16H3z" fill="#dfe9f3" stroke="#6d839c" /><path d="M12 5a8 8 0 1 0 0 14" stroke="#3f78c4" strokeWidth="3" /><path d="M11 12l5-6 3 5h4v11l-8-2z" fill="#f0c63a" stroke="#91700f" /></Ico>
      <div className="flex w-[38px] items-center gap-1.5">
        <Ico><path d="M1 5l6-5h14v18l-6 6H1z" fill="#a9adb4" stroke="#7b7f86" /><path d="M1 5h14v19M15 5l6-5" stroke="#d4d7dc" /></Ico>
        {arrow}
      </div>
      <div className="flex w-[38px] items-center gap-1.5">
        <Ico><circle cx="6" cy="16" r="4" fill="#c9dcef" stroke="#666b73" strokeWidth="2" /><circle cx="17" cy="18" r="4" fill="#c9dcef" stroke="#666b73" strokeWidth="2" /><path d="M3 14q0-12 5-12M20 15q3-10 3-8M10 16h3" stroke="#666b73" strokeWidth="2" /></Ico>
        {arrow}
      </div>
      <Ico>
        <defs>
          <radialGradient id="gold" cx="0.35" cy="0.3" r="0.8"><stop offset="0" stopColor="#fff3a8" /><stop offset="0.500" stopColor="#e2ae1c" /><stop offset="1" stopColor="#8a5f04" /></radialGradient>
        </defs>
        <circle cx="12" cy="12" r="11" fill="url(#gold)" />
      </Ico>
    </div>
  );
}

function TaskPane() {
  const items: [string, ReactNode][] = [
    ["资源", <><path d="M2 11L11 2l9 9" stroke="#b07b10" strokeWidth="3" /><path d="M5 10h12v11H5z" fill="#fff1b0" stroke="#8a6a10" /><path d="M9 14h4v7H9z" fill="#d89a1c" /><path d="M15 2h3v5h-3z" fill="#d02a2a" /></>],
    ["设计库", <><path d="M2 8l5 3v10H3z" fill="#2fae3a" stroke="#14601c" /><path d="M8 6l5-2v17H8z" fill="#f4c63a" stroke="#7a5c0a" /><path d="M14 2l6 4v15h-6z" fill="#4a78d8" stroke="#1c3f86" /></>],
    ["文件探索器", <><path d="M2 4h7l2 3h8v13H2z" fill="#e9bb3e" stroke="#8a6a10" /><path d="M6 9h15l-3 11H3z" fill="#ffeb8a" stroke="#8a6a10" /></>],
    ["视图调色板", <><path d="M2 1h18v14H2z" fill="#fff" stroke="#24416f" strokeWidth="2" /><path d="M5 4h5v3H5zM13 4h4v3h-4zM5 10h5v3H5zM13 10h4v3h-4z" fill="#f4d34a" stroke="#24416f" /><path d="M2 19h6M6 16l4 3-4 3z" stroke="#1a1aa8" strokeWidth="2" fill="#1a1aa8" /></>],
    ["外观", <><path d="M11 2a9 9 0 0 1 9 9h-9z" fill="#d02a2a" /><path d="M2 11a9 9 0 0 1 9-9v9z" fill="#3a6fd8" /><path d="M11 20a9 9 0 0 1-9-9h9z" fill="#2fae3a" /><path d="M20 11a9 9 0 0 1-9 9v-9z" fill="#f4c63a" /></>],
    ["自定义属性", <><path d="M3 9h14v13H3z" fill="#f2f2f2" stroke="#666" /><path d="M6 13h9M6 16h9M6 19h9" stroke="#888" /><path d="M5 9l5-6 8-2 2 4-6 3-3 4z" fill="#d99a58" stroke="#7a4c16" /></>],
    ["论坛", <><path d="M2 2h14v11H8l-4 4v-4H2z" fill="#4fa3e3" stroke="#2b6da8" /><path d="M9 9h12v9h-3v4l-4-4H9z" fill="#a5d43a" stroke="#6a9614" /></>],
  ];
  return (
    <div className="absolute top-[38px] right-0 flex w-[43px] flex-col border-t border-[#26282b]">
      {items.map(([n, i], k) => (
        <button
          key={n}
          type="button"
          aria-label={n}
          className={`flex h-10 items-center justify-center border-b-2 border-l border-[#1a1c1e] ${k === 1 ? "bg-[#e8ebef]" : "bg-[#abadb1]"}`}
        >
          <Ico className="size-[18px]">{i}</Ico>
        </button>
      ))}
    </div>
  );
}

function GraphicsArea() {
  const win: [string, string][] = [
    ["左", "M1 1h12v14H1zM9 4v8L5 8z"],
    ["右", "M1 1h12v14H1zM5 4v8l4-4z"],
    ["最小化", "M1 11h12v3H1z"],
    ["还原", "M5 1h8v8H5zM1 6h8v8H1z"],
    ["关闭", "M2 2l10 12M12 2L2 14"],
  ];
  return (
    <main className="relative min-w-0 flex-1 bg-linear-to-b from-[#c1c5d1] to-[#c6cad4]">
      <Sheet />
      <HeadsUp />
      <div className="absolute top-[-15px] right-2.5 flex gap-[9px]">
        {win.map(([n, d]) => (
          <button key={n} type="button" aria-label={n}>
            <Ico className="h-4 w-3.5" vb="0 0 14 16"><path d={d} fill="#dfe2e8" stroke="#6a6e76" strokeWidth="1.500" /></Ico>
          </button>
        ))}
      </div>
      <TaskPane />
      <div className="absolute top-[708px] left-[-2px] flex h-[39px] w-2.5 flex-col items-center justify-center gap-1 border border-l-0 border-[#1a1c1e] bg-[#e3e6eb]">
        {[0, 1, 2].map((k) => (
          <Ico key={k} className="h-1.5 w-1" vb="0 0 4 6"><path d="M4 0v6L0 3z" fill="#222" /></Ico>
        ))}
      </div>
      <div className="absolute top-[683px] left-[886px] flex h-[38px] border border-[#222] bg-white text-[26px] leading-9 whitespace-nowrap text-black">
        <span className="w-[76px] border-r border-[#222] bg-[#e6e6ee] pl-[7px]">长度:</span>
        <span className="w-[106px] pl-[7px]">256mm</span>
      </div>
      <MeasureDialog />
    </main>
  );
}

/* ---------- sheet tabs and status bar ---------- */

function SheetTabs() {
  const nav = ["M3 2v16M17 2v16L6 10z", "M15 2v16L4 10z", "M5 2v16l11-8z", "M3 2v16l11-8zM17 2v16"];
  return (
    <nav className="flex h-[26px] shrink-0 items-start border-t border-b-2 border-[#101214] bg-[#e3e6eb]">
      {nav.map((d, i) => (
        <button key={i} type="button" aria-label={`工作表导航${i + 1}`} className="flex h-[23px] w-6 items-center justify-center border border-[#7d809a] bg-[#a9abc0]">
          <Ico className="h-3.5 w-3" vb="0 0 20 20"><path d={d} fill="#7d809a" stroke="#7d809a" strokeWidth="2" /></Ico>
        </button>
      ))}
      <button type="button" className="flex h-[23px] w-[131px] items-start overflow-hidden border-x border-[#26283a] bg-[#d5d8e8] pl-4 text-[30px] leading-[42px] whitespace-nowrap text-black">
        <Ico className="mr-[3px] h-[13px] w-3.5"><path d="M2 1h14l6 7v15H2z" fill="#fff" stroke="#111" strokeWidth="2.500" /><path d="M10 14h12v8H10z" fill="#9bc" stroke="#111" strokeWidth="2" /></Ico>
        图纸1
      </button>
      <button type="button" aria-label="添加图纸" className="flex h-[21px] w-11 items-start justify-center border-r border-b-2 border-[#44475e] bg-[#b9bccd]">
        <Ico className="h-3.5 w-4"><path d="M6 8h17v10H6z" fill="#dfe9ee" stroke="#345" strokeWidth="2" /><path d="M6 0v14M0 6h13M2 2l9 9M11 2l-9 9" stroke="#f0901c" strokeWidth="2" /></Ico>
      </button>
      <span className="h-[21px] w-2 bg-[#a9abc0]" />
    </nav>
  );
}

const statusTiles = ["#a4a5a9", "#9fa0a2", "#c5c8cb", "#b3b3b1", "#989da3", "#a9adb0", "#999a9e", "#b4b5b4", "#c4c8cb", "#96979a", "#aeb1b8", "#c3c6ca", "#8a8987", "#9ca3aa", "#a7a9ad", "#b9bcc1", "#c8cacd", "#969a9f", "#a2a5a9", "#b9bbbf", "#7f8083", "#c6c9cb"];

function StatusBar() {
  return (
    <footer className="relative flex h-[39px] shrink-0 items-center border-t-2 border-b-2 border-t-white border-b-[#3b5d75] bg-[#d7dadf] text-[30px] leading-8 whitespace-nowrap text-black">
      <svg viewBox="0 0 352 46" className="absolute top-[-8px] left-0 h-[46px] w-[352px]" aria-hidden="true">
        <path d="M2 14h6M10 36v4M50 36v4M64 37l4 3M80 39h10M114 39h6M146 39h6M178 39h10M196 36v4M206 40l10-4M312 36v4" stroke="#111" strokeWidth="2.500" fill="none" />
        <path d="M8 14Q20 4 60 3L150 4Q200 0 250 6L300 2Q320-4 346 6Q350 24 340 36L300 36L270 42Q240 46 200 38L40 38Q10 40 6 26z" fill="#b8babd" />
        {statusTiles.map((f, i) => (
          <rect key={i} x={10 + i * 15} y="13" width="15" height="15" fill={f} />
        ))}
      </svg>
      <div className="ml-auto flex w-[1214px]">
        <span className="w-[206px]">55.513mm</span>
        <span className="w-[217px]">280.948mm</span>
        <span className="w-[66px] overflow-hidden">0mn</span>
        <span className="w-[137px]">完全定义</span>
        <span className="w-[279px]">在编辑 工程图视图1</span>
        <span className="w-[112px]">1 : 2.5</span>
        <span className="w-3 overflow-hidden">自定义</span>
      </div>
      <Ico className="absolute top-[-2px] right-[78px] h-2.5 w-3.5" vb="0 0 14 10"><path d="M1 0h12v10H1z" fill="#fff" stroke="#3d6b8a" /><path d="M5 4q0-2 2-2t2 2-2 3" stroke="#159a2a" strokeWidth="2" /></Ico>
      <Ico className="absolute top-[-2px] right-1 h-2.5 w-4" vb="0 0 16 10"><path d="M1 10l8-9 6 2v7z" fill="#f2c84a" stroke="#8a6a10" /></Ico>
      <div className="absolute top-2 right-0 flex h-7 w-[183px] items-center justify-between rounded-l-md bg-linear-to-b from-[#a6d41a] to-[#78a80c] px-2 text-[17px] leading-6 font-bold text-white">
        <span>全</span><span>中</span>
        <Ico className="size-3.5"><path d="M14 3a9 9 0 1 1-12 13q10 0 12-13z" fill="#fff" /></Ico>
        <Ico className="size-4" vb="0 0 16 16"><circle cx="4" cy="4" r="2.500" stroke="#fff" strokeWidth="1.500" /><circle cx="11" cy="8" r="3" stroke="#fff" strokeWidth="2" /><path d="M14 8q0 5-4 7" stroke="#fff" strokeWidth="2" /></Ico>
        <span>简</span>
        <Ico className="size-4"><path d="M12 1l3 8h8l-6 5 2 9-7-5-7 5 2-9-6-5h8z" stroke="#fff" strokeWidth="2.500" /></Ico>
        <span>软</span><span>证</span>
      </div>
    </footer>
  );
}

/* ---------- taskbar ---------- */

function Taskbar() {
  return (
    <footer className="relative flex h-[87px] shrink-0 items-center overflow-hidden bg-[linear-gradient(100deg,#0b5c9f_0%,#0c69b0_4%,#148fd9_7%,#1795e2_14%,#3fb3ea_21%,#35abe7_27%,#1b97e0_34%,#1a80cc_45%,#1463ab_60%,#134d8e_72%,#17457d_100%)] text-white">
      <button type="button" aria-label="开始" className="ml-5">
        <Ico className="size-[66px]" vb="0 0 66 66">
          <defs>
            <radialGradient id="orb" cx="0.500" cy="0.950" r="0.900"><stop offset="0" stopColor="#2fe4ff" /><stop offset="0.450" stopColor="#0b5f9e" /><stop offset="1" stopColor="#1c3f63" /></radialGradient>
          </defs>
          <circle cx="33" cy="33" r="32" fill="url(#orb)" stroke="#a8d5ee" strokeWidth="1.500" />
          <path d="M3 32a30 30 0 0 1 60 0q-14-6-30-3t-30 3z" fill="#fff" opacity="0.400" />
          <path d="M21 13q7-4 14 0l-4 17q-7-4-14 0z" fill="#f0662a" />
          <path d="M38 15q7 4 15 1l-4 16q-8 3-15-1z" fill="#8cc63f" />
          <path d="M15 34q7-4 14 0l-4 15q-7-4-14 0z" fill="#47a8ea" />
          <path d="M33 36q7 4 15 1l-4 15q-8 3-15-1z" fill="#fcc83c" />
        </Ico>
      </button>
      <button type="button" aria-label="资源管理器" className="ml-[43px]">
        <Ico className="size-[72px]" vb="0 0 72 72">
          <path d="M1 4l6-3h20l4 5h40v62H1z" fill="#f5d777" stroke="#d9b34c" />
          <path d="M10 2h16v5H10z" fill="#fff" /><path d="M10 2h5v4h-5z" fill="#3fae49" />
          <path d="M20 8h24l4 5h23v10H20z" fill="#eec65e" /><path d="M28 8h18v5H28z" fill="#fff" /><path d="M28 8h5v4h-5z" fill="#d04a2a" />
          <path d="M36 14h35v8H36z" fill="#e8bf58" /><path d="M46 14h18v5H46z" fill="#fff" /><path d="M46 14h5v4h-5z" fill="#2f86c8" />
          <path d="M1 20h36l4 4h30v44H1z" fill="#fbe891" />
          <path d="M8 71V48q0-6 6-6h44q6 0 6 6v23H50V58H24v13z" fill="#8ecbe8" stroke="#5ba6cc" strokeWidth="2" />
          <path d="M10 46q24-6 52 4v-2q0-4-5-4H14z" fill="#d5effa" opacity="0.700" />
        </Ico>
      </button>
      <button type="button" aria-label="Internet Explorer" className="ml-9">
        <Ico className="size-[74px]" vb="0 0 74 74">
          <path d="M67 52A31 31 0 1 1 71 40H29a14 12 0 0 0 24 5h16zM28 30h26a13 12 0 0 0-26 0z" fill="#6fdcfb" stroke="#259fd8" strokeWidth="1.500" />
          <path d="M64 26C68 12 66 8 60 8C46 8 20 32 13 54C8 66 12 66 20 66C8 76 -2 72 4 54C12 28 42 0 62 2C74 4 70 18 64 26z" fill="#fbbf2a" stroke="#d18d10" />
        </Ico>
      </button>
      <button type="button" aria-label="360浏览器" className="ml-[37px]">
        <Ico className="size-[74px]" vb="0 0 74 74">
          <circle cx="36" cy="38" r="35" fill="#fff" />
          <path d="M67 48A32 32 0 1 1 68 36H28a12 12 0 0 0 22 8h18zM27 31h20a11 11 0 0 0-20 0z" fill="#59c116" />
          <path d="M68 18C70 8 64 6 54 10C36 18 18 38 13 54C10 66 13 70 20 74C6 74 2 66 6 50C12 26 40 2 58 1C72 0 72 10 68 18z" fill="#3f9c14" stroke="#fff" strokeWidth="1.500" />
        </Ico>
      </button>
      <button type="button" aria-label="SOLIDWORKS 2015" className="ml-[19px] flex h-[86px] w-[107px] items-center justify-center rounded-xs border-2 border-white bg-linear-to-b from-[#d6eaf6] to-[#9fd2f0]">
        <Ico className="size-[80px]" vb="0 0 80 80">
          <path d="M2 14L38 2l36 10-34 14z" fill="#ff2a22" />
          <path d="M2 14l38 12v50L4 60z" fill="#c91414" />
          <path d="M40 26l34-14v46L40 76z" fill="#6f0a0a" />
          <text x="6" y="57" fontSize="44" fontWeight="700" fontFamily="Liberation Sans" fill="#fff">S</text>
          <text x="38" y="52" fontSize="36" fontWeight="700" fontFamily="Liberation Sans" fill="#fff">W</text>
          <text x="33" y="76" fontSize="20" fontWeight="700" fontFamily="Open Sans" fill="#fff" stroke="#222" strokeWidth="3" paintOrder="stroke">2015</text>
        </Ico>
      </button>

      <div className="mr-[26px] ml-auto flex h-full items-center">
        <span className="font-['Liberation_Serif',serif] text-[23px]">CH</span>
        <Ico className="ml-3 size-9" vb="0 0 36 36"><rect x="1" y="1" width="34" height="34" rx="10" fill="#f1592a" stroke="#fff" strokeWidth="2" /><path d="M25 10q-14-4-14 3c0 6 14 2 14 9s-14 5-15 2" stroke="#fff" strokeWidth="5" /></Ico>
        <Ico className="ml-3 size-9" vb="0 0 36 36"><circle cx="18" cy="18" r="16" fill="#1f3fb8" stroke="#fff" strokeWidth="2.500" /><path d="M12 13q1-6 7-6t6 5-6 6v4M19 25v4" stroke="#fff" strokeWidth="4" /></Ico>
        <Ico className="ml-2 h-8 w-3" vb="0 0 12 32"><path d="M3 5h6v3H3zM3 24h6M3 24l3 3 3-3" stroke="#fff" strokeWidth="1.500" /></Ico>
        <Ico className="ml-8 h-1.5 w-3" vb="0 0 12 6"><path d="M6 0l6 6H0z" fill="#fff" /></Ico>
        <Ico className="ml-11 size-10" vb="0 0 40 40"><circle cx="20" cy="20" r="19" fill="#2f9a2f" /><circle cx="21" cy="20" r="15" fill="#f6d52a" /><path d="M5 12a17 17 0 0 1 28-6q-16-2-28 6z" fill="#7ccc3c" /><path d="M20 11v18M11 20h18" stroke="#0f6a1c" strokeWidth="6" /></Ico>
        <Ico className="ml-5 size-10" vb="0 0 40 40"><rect width="40" height="40" rx="3" fill="#2f8f3c" /><circle cx="20" cy="20" r="17" stroke="#8fd09a" /><path d="M20 20Q12 10 17 3h7q-4 8-4 17Q30 12 37 17v7q-8-4-17-4Q28 30 23 37h-7q4-8 4-17Q10 28 3 23v-7q8 4 17 4z" fill="#f2fbf2" /><circle cx="20" cy="20" r="3" fill="#2f8f3c" /></Ico>
        <Ico className="ml-6 size-9" vb="0 0 36 36"><path d="M32 1q-2 8-10 8H14Q6 12 5 22q0 11 10 11h10q6-2 7-12H18M32 2q-10 2-14 6" stroke="#dc2a1c" strokeWidth="6" /></Ico>
        <Ico className="ml-5 size-[38px]" vb="0 0 38 38"><path d="M3 6h18v28H3zM8 2h8v4" stroke="#fff" strokeWidth="4" /><path d="M18 14h19v7q-1 7-8 8v7h-4v-7q-7-1-7-8z" fill="#fff" stroke="#1c3c66" strokeWidth="1.500" /><path d="M23 6v8M32 6v8" stroke="#fff" strokeWidth="3" /></Ico>
        <Ico className="ml-6 h-[34px] w-8" vb="0 0 32 34"><path d="M1 11h7l9-9v30l-9-9H1z" fill="#fff" stroke="#1c3c66" strokeWidth="1.500" /><path d="M27 10q5 7 0 14" stroke="#cfe0f2" strokeWidth="2" /></Ico>
        <Ico className="ml-6 h-8 w-[38px]" vb="0 0 38 32"><path d="M0 26h6v6H0zM8 21h6v11H8zM16 14h6v18h-6zM24 8h6v24h-6zM32 1h6v31h-6z" fill="#fff" /></Ico>
        <Ico className="ml-[22px] size-10" vb="0 0 40 40"><ellipse cx="17" cy="34" rx="14" ry="4" fill="#f2a21c" /><ellipse cx="17" cy="14" rx="11" ry="12" fill="#1b1b22" /><ellipse cx="17" cy="25" rx="12" ry="11" fill="#1b1b22" /><ellipse cx="17" cy="28" rx="8" ry="7" fill="#fff" /><path d="M6 19q11 6 22 0v6q-11 5-22 0z" fill="#e02c24" /><circle cx="13" cy="9" r="3" fill="#fff" /><circle cx="21" cy="9" r="3" fill="#fff" /><ellipse cx="17" cy="15" rx="6" ry="2.500" fill="#f6b71c" /><circle cx="29" cy="29" r="10" fill="#f0a04a" stroke="#fff" /><path d="M23 27h12M23 32h12" stroke="#fff" strokeWidth="2.500" /></Ico>
        <time className="ml-[22px] w-[160px] self-start pt-1 text-center text-[30px] leading-10">
          9:24
          <br />
          2015/1/21
        </time>
      </div>
      <button type="button" aria-label="显示桌面" className="absolute top-0 right-0 h-full w-3.5 border-l border-[#7fa3c8] bg-[#3a6ba3]" />
      <a href="#watermark" className="absolute right-[18px] bottom-0 font-['Liberation_Sans','Noto_Sans_CJK_SC',sans-serif] text-[19px] leading-6 font-bold text-[#e8262c] [-webkit-text-stroke:3px_white] [paint-order:stroke]">
        三维网www.3dportal.cn
      </a>
    </footer>
  );
}

export default function App() {
  return (
    <div className="flex h-screen w-full flex-col overflow-hidden bg-[#d7dadf] font-['Noto_Sans','Noto_Sans_CJK_SC',sans-serif] text-black">
      <TitleBar />
      <CommandManager />
      <CommandTabs />
      <div className="flex min-h-0 flex-1">
        <PropertyManager />
        <GraphicsArea />
      </div>
      <SheetTabs />
      <StatusBar />
      <Taskbar />
    </div>
  );
}
